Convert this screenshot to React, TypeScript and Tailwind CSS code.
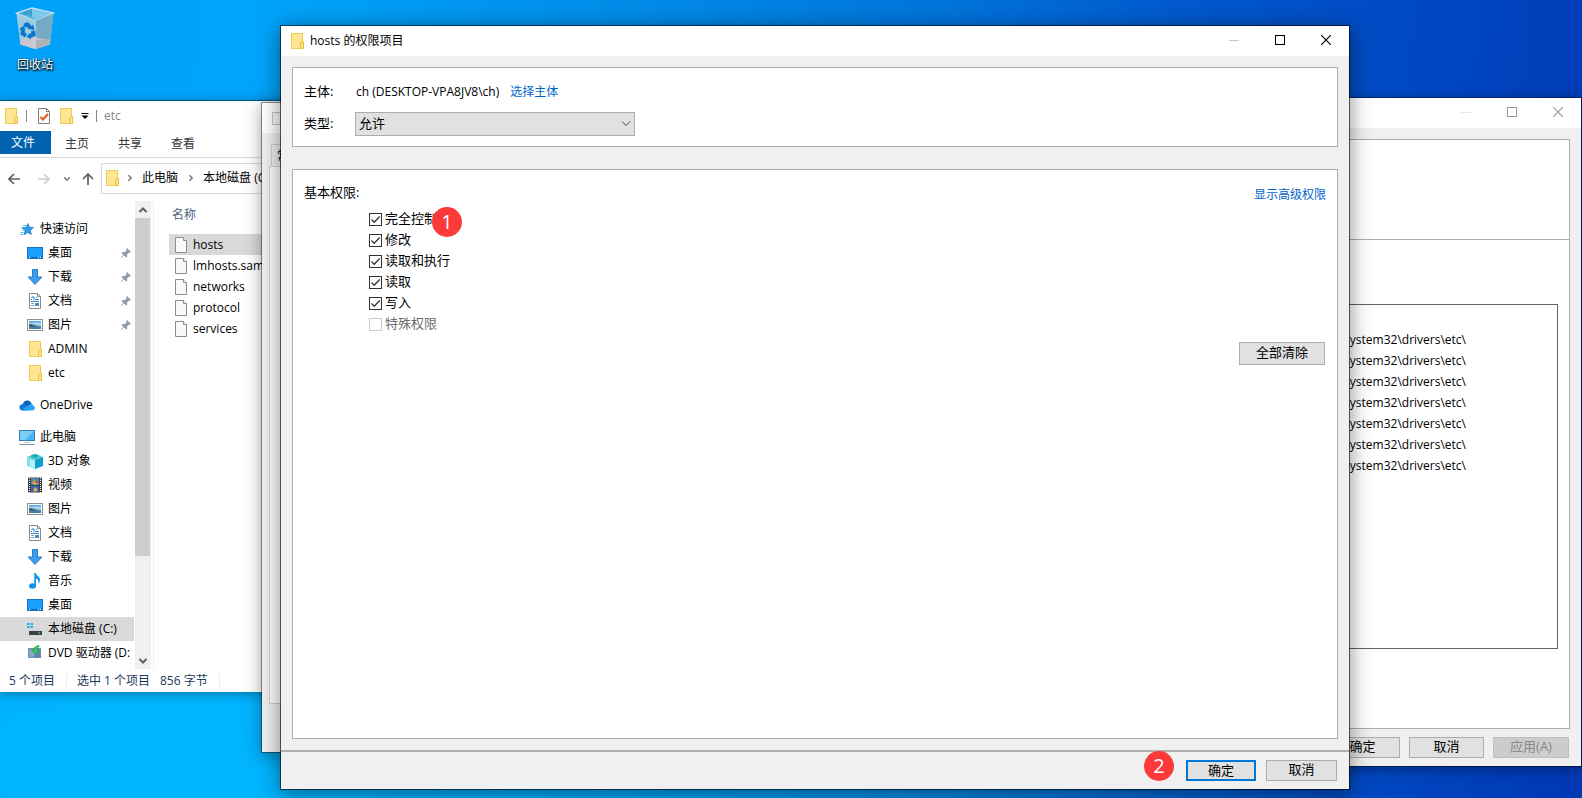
import { useState } from 'react';
import type { ReactNode } from 'react';
import clsx from 'clsx';

interface IconProps {
  className?: string;
}

function FolderIcon({ className }: IconProps) {
  return (
    <svg width="13" height="16" viewBox="0 0 13 16" className={clsx('shrink-0', className)}>
      <rect x="0.5" y="0.5" width="11" height="15" fill="#ffe694" stroke="#f0cd55" />
      <path d="M10.5 8.5h2v7h-3v-6z" fill="#ffe18a" stroke="#e8c03c" />
    </svg>
  );
}

function FileIcon() {
  return (
    <svg width="12" height="16" viewBox="0 0 12 16" className="shrink-0">
      <path d="M0.5 0.5h8l3 3v12h-11z" fill="#f8fafa" stroke="#8c8c8c" />
      <path d="M8.5 0.5v3h3" fill="#fff" stroke="#8c8c8c" />
    </svg>
  );
}

function CheckedFileIcon() {
  return (
    <svg width="12" height="16" viewBox="0 0 12 16" className="shrink-0">
      <path d="M0.5 0.5h8l3 3v12h-11z" fill="#fafafa" stroke="#7d7d7d" />
      <path d="M8.5 0.5v3h3" fill="none" stroke="#7d7d7d" />
      <path d="M2.5 9l2.500 2.500 5-5.500" fill="none" stroke="#e8541c" strokeWidth="2" />
    </svg>
  );
}

function RecycleBinIcon() {
  return (
    <svg width="40" height="44" viewBox="0 0 40 44">
      <path d="M1.500 6l4 31.500 15 4.500 14.500-4.500L38.500 6 19 13z" fill="#8cc3de" />
      <path d="M1.500 6L17 1l21.500 5L20 14z" fill="#57b5e6" stroke="#d5e8f0" strokeWidth="1.300" />
      <path d="M17 1.500V9l3 4.500L37 6z" fill="#7ec8ec" />
      <path d="M17 1.500V9L4.500 7z" fill="#3f9fd4" />
      <path d="M1.500 6.500L20 14v28L5.500 37.500z" fill="#9accdf" />
      <path d="M20 14l18.500-7.500L35 37.500 20.500 42z" fill="#74aac6" />
      <path d="M5 33l12-3 18 3-.5 4.500L20.500 42l-15-4.500z" fill="#c9c7cd" />
      <path d="M20.200 33l14.500-1-.5 5.500-13.700 4.500z" fill="#aeb0b8" />
      <path d="M20 14v28" stroke="#c4e2ee" strokeWidth="1" />
      <g fill="none" stroke="#0a74cf" strokeWidth="4">
        <path d="M9 18.500l3.500-1 3.500 4" />
        <path d="M8 22.500l-.5 4 3.500 2" />
        <path d="M18 24l.5 3.500-4.500 2" />
      </g>
      <path d="M13.500 21.500l6 2-1-6z" fill="#0a74cf" />
      <path d="M4 23l6.500-.5-2.500-4z" fill="#0a74cf" />
      <path d="M15.500 26l-4 3.500 4.500 3z" fill="#0a74cf" />
    </svg>
  );
}

function StarIcon() {
  return (
    <svg width="16" height="16" viewBox="0 0 16 16">
      <path d="M9 2.500l1.500 3.700 4 .3-3.200 2.800 1.100 4.200-3.600-2-3.700 2.200 1-4.200L3 6.800l4.400-.6z" fill="#2f9ce8" stroke="#1a74c0" strokeWidth="0.700" />
      <path d="M4 4.500h3M2 6.500h2M3.500 9h2M1.500 11.500h3M1 13.500h3" stroke="#5cc0f5" />
    </svg>
  );
}

function DesktopIcon() {
  return (
    <svg width="16" height="16" viewBox="0 0 16 16">
      <rect x="0.5" y="2.500" width="15" height="11" fill="#1a9fff" stroke="#1873b8" />
      <path d="M1 12.500h14" stroke="#0b6ab5" />
      <path d="M2 12.500h1M11 12.500h1M13 12.500h1" stroke="#fff" />
    </svg>
  );
}

function DownloadIcon() {
  return (
    <svg width="16" height="16" viewBox="0 0 16 16">
      <path d="M5.500 0.500h5v7.500h4.500L8 15.500 1 8h4.500z" fill="#3c9bea" stroke="#2b7fcc" />
    </svg>
  );
}

function DocumentIcon() {
  return (
    <svg width="16" height="16" viewBox="0 0 16 16">
      <path d="M2.500 0.500h8l3 3v12h-11z" fill="#fff" stroke="#8a8a8a" />
      <path d="M10.500 0.500v3h3" fill="none" stroke="#8a8a8a" />
      <path d="M4 6.500h1M5 5v-1h2v3M9 4.500h1M8 6.500h4M4 8.500h8" stroke="#2b8bdc" fill="none" />
      <path d="M4 10.500h3M4 12.500h3" stroke="#9a9a9a" />
      <rect x="8" y="10" width="4" height="3" fill="#4a90c0" />
    </svg>
  );
}

function PictureIcon() {
  return (
    <svg width="16" height="16" viewBox="0 0 16 16">
      <rect x="0.5" y="2.500" width="15" height="11" fill="#fff" stroke="#8f8f8f" />
      <rect x="2" y="4" width="12" height="8" fill="#a7d3f5" />
      <path d="M2 8c3-2 6 1 12 1v3H2z" fill="#4b7fa0" />
      <path d="M2 7.500c2-1 4 1 6 2H2z" fill="#2f5d4c" />
      <path d="M2 4h12v1.500H2z" fill="#5fa6e8" />
    </svg>
  );
}

function OneDriveIcon() {
  return (
    <svg width="16" height="16" viewBox="0 0 16 16">
      <path d="M4 6.500C5 3.500 9.500 2 12 5.500l1 3-8 3z" fill="#0a64b8" />
      <path d="M3.500 13.500C-.5 13.500-.8 7.500 3.500 7c2-.4 3.500.5 5 1.500l5 3-5 2z" fill="#0f7bd6" />
      <path d="M3 13.300l6.500-5C12 6 14 7.500 14 8.500c2.500.5 2.500 5-.5 5H4z" fill="#27a5ee" />
    </svg>
  );
}

function ComputerIcon() {
  return (
    <svg width="16" height="16" viewBox="0 0 16 16">
      <rect x="0.5" y="1.500" width="15" height="10" fill="#49b5f7" stroke="#3a7ca8" />
      <path d="M1 2l14 0-9 9H1z" fill="#7accfb" />
      <path d="M5 13.500h6" stroke="#b8cbd8" />
      <path d="M0.500 15.500h15" stroke="#7e97a8" />
    </svg>
  );
}

function CubeIcon() {
  return (
    <svg width="16" height="16" viewBox="0 0 16 16">
      <path d="M0 4l8-3 8 3-8 3z" fill="#45c3d6" />
      <path d="M0 4l8 3v9l-8-3z" fill="#7fe0ea" />
      <path d="M16 4L8 7v9l8-3z" fill="#0c9fd0" />
      <path d="M3 6l5 2v8l-5-2z" fill="#b5f0f2" />
      <path d="M3.500 2.500L8 1l4.500 1.500L8 5z" fill="#16aebd" />
    </svg>
  );
}

function VideoIcon() {
  return (
    <svg width="16" height="16" viewBox="0 0 16 16">
      <rect x="1" y="0.500" width="14" height="15" fill="#404040" />
      <path d="M2.500 1v15M13.500 1v15" stroke="#f0f0f0" strokeDasharray="1 1" />
      <rect x="4" y="1" width="8" height="7" fill="#4d7cc8" />
      <rect x="4" y="9" width="8" height="6" fill="#3566b5" />
      <path d="M5 6l3-3 3 3-3 2z" fill="#e0b33c" />
      <path d="M8 4h3v2H8z" fill="#d0503c" />
      <path d="M6 13l2-3 3 3-3 2z" fill="#e0b33c" />
      <path d="M6 2h2v2H5z" fill="#4ca862" />
    </svg>
  );
}

function MusicIcon() {
  return (
    <svg width="16" height="16" viewBox="0 0 16 16">
      <ellipse cx="5.500" cy="13" rx="3.500" ry="2.700" fill="#0f95f0" />
      <path d="M7.300 0H9c0 3 4 3.500 4 7 0 1.500-.7 3-1.500 3.500C12 7.500 10.500 6 9 5.500V13H7.300z" fill="#0f95f0" />
    </svg>
  );
}

function DiskIcon() {
  return (
    <svg width="16" height="16" viewBox="0 0 16 16">
      <path d="M0 2h2.500v2H0zM3.500 2H6v2H3.500zM0 5h2.500v2H0zM3.500 5H6v2H3.500z" fill="#1ab4f0" />
      <path d="M4 7.500h8l2 3H2z" fill="#d4d7d9" />
      <rect x="2" y="10" width="13" height="4" fill="#3c4245" />
      <rect x="11" y="11.500" width="2" height="1" fill="#47e04c" />
    </svg>
  );
}

function DvdIcon() {
  return (
    <svg width="16" height="16" viewBox="0 0 16 16">
      <rect x="1.500" y="3.500" width="12" height="9" fill="#5b87ad" stroke="#6a8db0" />
      <path d="M2 4l11 0-7 8H2z" fill="#84a9c8" />
      <path d="M12 0.500c-3.500.5-5 2-5 4.500H4.500l3.500 4 4-4H10c0-2 .5-2.500 2-3.500z" fill="#35d058" stroke="#118a35" strokeWidth="0.600" />
    </svg>
  );
}

function PinIcon() {
  return (
    <svg width="10" height="10" viewBox="0 0 10 10">
      <path d="M6 0l4 4-1 .8-1-.2-2 2 .2 2-1 1L3 7.400.5 10 0 9.500 2.500 7 .5 5l1-1 2 .2 2-2L5.300 1z" fill="#8f9aa3" />
    </svg>
  );
}

function ChevronIcon({ className }: IconProps) {
  return (
    <svg width="10" height="10" viewBox="0 0 10 10" className={clsx('shrink-0', className)}>
      <path d="M1.500 3l3.500 3.500L8.500 3" fill="none" stroke="currentColor" strokeWidth="2" />
    </svg>
  );
}

function ArrowIcon({ className }: IconProps) {
  return (
    <svg width="12" height="12" viewBox="0 0 12 12" className={clsx('shrink-0', className)}>
      <path d="M12 6H1M6 1L1 6l5 5" fill="none" stroke="currentColor" strokeWidth="1.700" />
    </svg>
  );
}

interface NavItem {
  label: string;
  icon: ReactNode;
  root?: boolean;
  pinned?: boolean;
  selected?: boolean;
}

const NAV_GROUPS: NavItem[][] = [
  [
    { label: '快速访问', icon: <StarIcon />, root: true },
    { label: '桌面', icon: <DesktopIcon />, pinned: true },
    { label: '下载', icon: <DownloadIcon />, pinned: true },
    { label: '文档', icon: <DocumentIcon />, pinned: true },
    { label: '图片', icon: <PictureIcon />, pinned: true },
    { label: 'ADMIN', icon: <FolderIcon /> },
    { label: 'etc', icon: <FolderIcon /> },
  ],
  [{ label: 'OneDrive', icon: <OneDriveIcon />, root: true }],
  [
    { label: '此电脑', icon: <ComputerIcon />, root: true },
    { label: '3D 对象', icon: <CubeIcon /> },
    { label: '视频', icon: <VideoIcon /> },
    { label: '图片', icon: <PictureIcon /> },
    { label: '文档', icon: <DocumentIcon /> },
    { label: '下载', icon: <DownloadIcon /> },
    { label: '音乐', icon: <MusicIcon /> },
    { label: '桌面', icon: <DesktopIcon /> },
    { label: '本地磁盘 (C:)', icon: <DiskIcon />, selected: true },
    { label: 'DVD 驱动器 (D:', icon: <DvdIcon /> },
  ],
];

const FILES = ['hosts', 'lmhosts.sam', 'networks', 'protocol', 'services'];

const PERMISSIONS = [
  { id: 'full', label: '完全控制', badge: '1' },
  { id: 'modify', label: '修改' },
  { id: 'execute', label: '读取和执行' },
  { id: 'read', label: '读取' },
  { id: 'write', label: '写入' },
  { id: 'special', label: '特殊权限', disabled: true },
];

function WindowControls({ inactive }: { inactive?: boolean }) {
  return (
    <div className={clsx('ml-auto flex h-7 self-start', inactive ? 'text-[#999]' : 'text-black')}>
      <button type="button" aria-label="最小化" disabled className="grid w-[46px] place-items-center">
        <svg width="10" height="10" viewBox="0 0 10 10">
          <path d="M0 5.500h10" stroke={inactive ? '#e6e6e6' : '#c8c8c8'} />
        </svg>
      </button>
      <button type="button" aria-label="最大化" className="grid w-[46px] place-items-center">
        <svg width="10" height="10" viewBox="0 0 10 10">
          <rect x="0.5" y="0.5" width="9" height="9" fill="none" stroke="currentColor" />
        </svg>
      </button>
      <button type="button" aria-label="关闭" className="grid w-[46px] place-items-center">
        <svg width="10" height="10" viewBox="0 0 10 10">
          <path d="M0 0l10 10M10 0L0 10" stroke="currentColor" strokeWidth="1.200" />
        </svg>
      </button>
    </div>
  );
}

interface DialogButtonProps {
  children: ReactNode;
  className?: string;
  primary?: boolean;
  disabled?: boolean;
}

function DialogButton({ children, className, primary, disabled }: DialogButtonProps) {
  return (
    <button
      type="button"
      disabled={disabled}
      className={clsx(
        'grid place-items-center pb-[3px] text-[13px] leading-4',
        primary ? 'border-2 border-[#0078d7]' : 'border',
        disabled ? 'border-[#bfbfbf] bg-[#ccc] text-[#888]' : 'bg-[#e1e1e1]',
        !primary && !disabled && 'border-[#adadad]',
        className,
      )}
    >
      {children}
    </button>
  );
}

function StepBadge({ children, className }: { children: ReactNode; className?: string }) {
  return (
    <span
      className={clsx(
        'absolute grid size-[30px] place-items-center rounded-full bg-[#fd3a3a] text-xl leading-5 text-white',
        className,
      )}
    >
      {children}
    </span>
  );
}

function NavRow({ item }: { item: NavItem }) {
  return (
    <a
      href="#"
      className={clsx(
        'flex h-6 items-center gap-[5px] whitespace-nowrap',
        item.root ? 'pl-[19px]' : 'pl-[27px]',
        item.selected && 'bg-[#d9d9d9]',
      )}
    >
      <span className="grid size-4 shrink-0 place-items-center">{item.icon}</span>
      {item.label}
      {item.pinned && (
        <span className="ml-auto pr-[3px]">
          <PinIcon />
        </span>
      )}
    </a>
  );
}

/** 资源管理器窗口 */
function ExplorerWindow() {
  return (
    <section className="absolute top-[100px] bottom-[106px] left-0 flex w-[420px] flex-col border-t border-black/40 bg-white bg-clip-padding shadow-[0_2px_10px_rgba(0,0,0,0.35)]">
      <div className="flex h-[30px] shrink-0 items-center pl-[5px] text-[#888]">
        <FolderIcon />
        <span className="ml-2 h-3 w-px bg-[#888]" />
        <span className="ml-[11px]">
          <CheckedFileIcon />
        </span>
        <FolderIcon className="ml-[10px]" />
        <svg width="8" height="8" viewBox="0 0 8 8" className="ml-2">
          <path d="M0.500 1.500h7" stroke="#000" />
          <path d="M0.500 3.500h7L4 7z" fill="#000" />
        </svg>
        <span className="mr-[7px] ml-[7px] h-3 w-px bg-[#888]" />
        etc
      </div>
      <nav className="flex h-[27px] shrink-0 items-start gap-[29px] border-b border-[#dadbdc] text-[#333]">
        <a href="#" className="-mr-[15px] flex h-[23px] w-[51px] items-center bg-[#0063b1] pl-[11px] text-white">
          文件
        </a>
        <a href="#" className="flex h-[26px] items-center">主页</a>
        <a href="#" className="flex h-[26px] items-center">共享</a>
        <a href="#" className="flex h-[26px] items-center">查看</a>
      </nav>
      <div className="mt-[5px] flex h-[31px] shrink-0 items-center pl-2">
        <ArrowIcon className="text-[#606060]" />
        <ArrowIcon className="ml-[18px] rotate-180 text-[#ccc]" />
        <ChevronIcon className="ml-[13px] size-2 text-[#808080]" />
        <ArrowIcon className="ml-[11px] rotate-90 text-[#606060]" />
        <div className="ml-[7px] flex h-full min-w-0 flex-1 items-center border border-[#d9d9d9] pb-px pl-1">
          <FolderIcon />
          <ChevronIcon className="ml-[7px] size-2 -rotate-90 text-[#808080]" />
          <span className="ml-2">此电脑</span>
          <ChevronIcon className="ml-[9px] size-2 -rotate-90 text-[#808080]" />
          <span className="ml-2">本地磁盘 (C:)</span>
        </div>
      </div>
      <div className="flex min-h-0 flex-1 pt-[7px]">
        <nav className="flex w-[134px] min-w-0 flex-col gap-2 overflow-hidden pt-4">
          {NAV_GROUPS.map((group) => (
            <div key={group[0].label}>
              {group.map((item) => (
                <NavRow key={item.label} item={item} />
              ))}
            </div>
          ))}
        </nav>
        <div className="ml-px flex w-4 shrink-0 flex-col items-center bg-[#f0f0f0]">
          <ChevronIcon className="mt-1 mb-[3px] rotate-180 text-[#606060]" />
          <div className="mr-px w-[15px] flex-7 bg-[#cdcdcd]" />
          <div className="flex-2" />
          <ChevronIcon className="my-[3px] text-[#606060]" />
        </div>
        <div className="ml-[2px] flex-1 border-l border-[#f0f0f0] pl-[15px]">
          <div className="flex h-[33px] items-center pb-1.5 pl-[3px] text-[#4c607a]">名称</div>
          <ul>
            {FILES.map((name, i) => (
              <li
                key={name}
                className={clsx('flex h-[21px] items-center gap-[6px] pl-[6px]', i === 0 && 'bg-[#d9d9d9]')}
              >
                <FileIcon />
                {name}
              </li>
            ))}
          </ul>
        </div>
      </div>
      <footer className="flex h-[23px] shrink-0 items-center pl-[9px] text-[#1e395b]">
        <span className="w-[58px] border-r border-[#eee]">5 个项目</span>
        <span className="ml-[10px] w-[83px]">选中 1 个项目</span>
        <span className="w-[60px] border-r border-[#eee]">856 字节</span>
      </footer>
    </section>
  );
}

/** 文件属性窗口,大部分被前面的对话框遮住 */
function PropertiesWindow() {
  return (
    <section className="absolute top-[102px] bottom-[45px] left-[261px] flex w-[363px] flex-col border border-black/40 bg-[#f0f0f0] bg-clip-padding shadow-[0_3px_16px_rgba(0,0,0,0.35)]">
      <div className="flex h-[30px] shrink-0 items-center bg-white pl-[10px]">
        <span className="h-[13px] w-3 border border-[#c0c8c8] bg-[#fafafa]" />
      </div>
      <div className="flex flex-1 flex-col px-[7px] pt-[11px] pb-12">
        <span className="ml-[2px] flex h-[22px] w-12 items-center border border-b-0 border-[#d0d0d0] pl-[5px]">
          常规
        </span>
        <div className="flex-1 border border-[#d0d0d0] bg-white" />
      </div>
    </section>
  );
}

/** 高级安全设置窗口 */
function SecurityWindow() {
  return (
    <section className="absolute top-[97px] right-0 bottom-[31px] left-[520px] flex flex-col border border-black/40 bg-[#f0f0f0] bg-clip-padding shadow-[0_3px_12px_rgba(0,0,0,0.35)]">
      <div className="flex h-[30px] shrink-0 bg-white">
        <WindowControls inactive />
      </div>
      <div className="flex flex-1 flex-col px-[11px] pt-[11px]">
        <div className="flex flex-1 flex-col border border-[#adadad] bg-white">
          <div className="h-[100px] border-b border-[#adadad]" />
          <div className="mx-[11px] mt-16 mb-[79px] flex flex-1 flex-col items-end border border-[#646464] pt-6 pr-[91px]">
            {Array.from({ length: 7 }, (_, i) => (
              <span key={i} className="leading-[21px]">{'System32\\drivers\\etc\\'}</span>
            ))}
          </div>
        </div>
        <div className="flex h-[37px] items-center justify-end gap-[9px] pr-px">
          <DialogButton className="h-[21px] w-[75px]">确定</DialogButton>
          <DialogButton className="h-[21px] w-[75px]">取消</DialogButton>
          <DialogButton className="h-[21px] w-[76px]" disabled>
            应用(A)
          </DialogButton>
        </div>
      </div>
    </section>
  );
}

/** 权限项目对话框 */
function PermissionDialog() {
  const [checked, setChecked] = useState<Record<string, boolean>>({
    full: true,
    modify: true,
    execute: true,
    read: true,
    write: true,
  });

  return (
    <section className="absolute top-[25px] right-[232px] bottom-2 left-[280px] flex flex-col border border-black/60 bg-[#f0f0f0] bg-clip-padding shadow-[0_4px_20px_rgba(0,0,0,0.45)]">
      <header className="flex h-[30px] shrink-0 items-center bg-white pl-[10px]">
        <FolderIcon />
        <h1 className="ml-[6px]">hosts 的权限项目</h1>
        <WindowControls />
      </header>

      <div className="flex flex-1 flex-col gap-[22px] px-[11px] pt-[11px] pb-[11px]">
        <div className="flex flex-col gap-2 border border-[#adadad] bg-white px-[11px] pt-3 pb-[10px]">
          <div className="flex h-6 items-center">
            <span className="w-[52px] text-[13px]">主体:</span>
            <span>ch (DESKTOP-VPA8JV8\ch)</span>
            <a href="#" className="ml-[11px] text-[#0066cc]">选择主体</a>
          </div>
          <div className="flex h-6 items-center">
            <label htmlFor="type" className="w-[51px] text-[13px]">类型:</label>
            <div className="grid w-[280px] items-center">
              <select
                id="type"
                defaultValue="allow"
                className="col-start-1 row-start-1 h-6 appearance-none border border-[#adadad] bg-[#e1e1e1] pb-0.5 pl-[3px] text-[13px] leading-5"
              >
                <option value="allow">允许</option>
                <option value="deny">拒绝</option>
              </select>
              <svg width="10" height="6" viewBox="0 0 10 6" className="pointer-events-none col-start-1 row-start-1 mr-1 justify-self-end">
                <path d="M1 0.500l4 4 4-4" fill="none" stroke="#444" />
              </svg>
            </div>
          </div>
        </div>

        <div className="flex-1 border border-[#adadad] bg-white px-[11px] pt-[13px]">
          <div className="flex h-6 items-center justify-between">
            <h2 className="pb-1 text-[13px]">基本权限:</h2>
            <a href="#" className="text-[#0066cc]">显示高级权限</a>
          </div>
          <ul className="mt-[2px] pl-[65px]">
            {PERMISSIONS.map((p) => (
              <li key={p.id} className="relative flex h-[21px] w-fit items-center">
                <span className="grid place-items-center">
                  <input
                    type="checkbox"
                    id={p.id}
                    disabled={p.disabled}
                    checked={!!checked[p.id]}
                    onChange={(e) => setChecked({ ...checked, [p.id]: e.target.checked })}
                    className="peer col-start-1 row-start-1 size-[13px] appearance-none border border-[#333] bg-white disabled:border-[#ccc]"
                  />
                  <svg width="13" height="13" viewBox="0 0 13 13" className="pointer-events-none invisible col-start-1 row-start-1 peer-checked:visible">
                    <path d="M2.500 6.500l2.700 2.700 5.500-5.700" fill="none" stroke="#333" strokeWidth="1.300" />
                  </svg>
                </span>
                <label htmlFor={p.id} className={clsx('pb-0.5 pl-[3px] text-[13px]', p.disabled && 'text-[#6d6d6d]')}>
                  {p.label}
                </label>
                {p.badge && <StepBadge className="-top-[2px] left-[63px]">{p.badge}</StepBadge>}
              </li>
            ))}
          </ul>
          <div className="mt-[7px] flex justify-end pr-px">
            <DialogButton className="h-[23px] w-[86px]">全部清除</DialogButton>
          </div>
        </div>
      </div>

      <footer className="relative flex h-[39px] shrink-0 justify-end gap-[10px] border-t-2 border-[#b0b0b0] pt-2 pr-3">
        <StepBadge className="-top-px right-[175px]">2</StepBadge>
        <DialogButton className="h-[21px] w-[70px]" primary>确定</DialogButton>
        <DialogButton className="h-[21px] w-[71px]">取消</DialogButton>
      </footer>
    </section>
  );
}

export default function App() {
  return (
    <main className="relative h-screen min-h-[720px] w-full overflow-hidden bg-[radial-gradient(ellipse_at_10%_100%,#00b6ff_0%,rgba(0,182,255,0.8)_15%,rgba(0,182,255,0)_60%),linear-gradient(95deg,#00a0f8_0%,#00a4fa_15%,#008ce8_38%,#0072da_58%,#0058cc_72%,#0048c2_86%,#0038b4_100%)] font-['Open_Sans','Noto_Sans_CJK_SC',sans-serif] text-xs text-black">
      <a href="#" className="flex w-[70px] flex-col items-center pt-[7px] text-white">
        <RecycleBinIcon />
        <span className="mt-[6px] [text-shadow:0_1px_2px_#000,1px_1px_2px_#000]">回收站</span>
      </a>
      <ExplorerWindow />
      <SecurityWindow />
      <PropertiesWindow />
      <PermissionDialog />
    </main>
  );
}
